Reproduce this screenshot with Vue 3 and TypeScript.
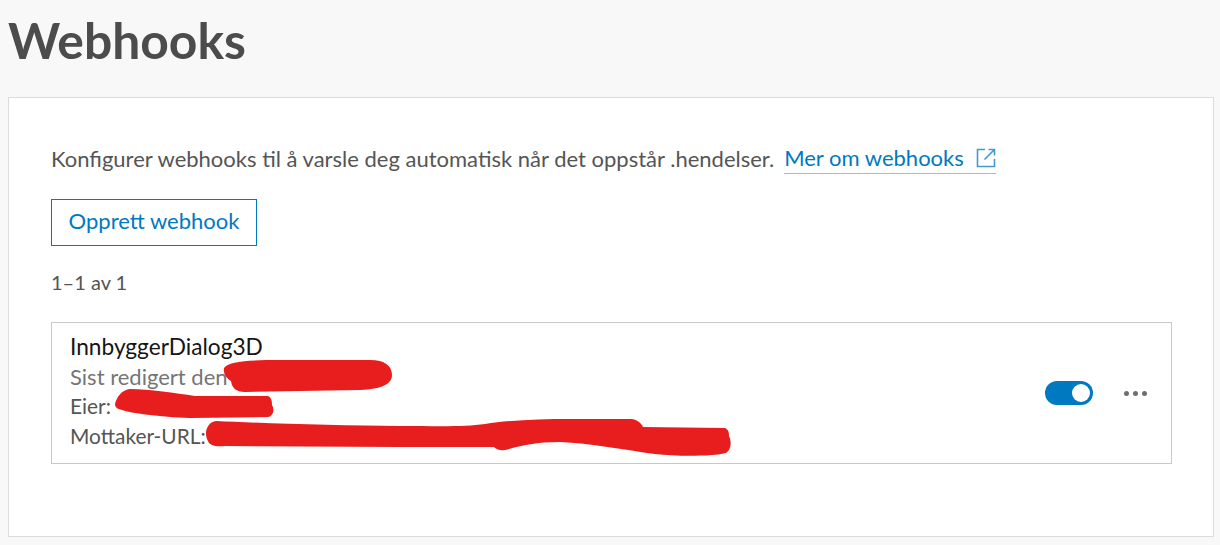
<script setup lang="ts">
const title = 'Webhooks'
</script>

<template>
  <div class="page">
    <h1 class="title">{{ title }}</h1>
    <section class="panel">
      <p class="intro">
        <span>Konfigurer webhooks til å varsle deg automatisk når det oppstår .hendelser.</span>
        <a class="link">
          <span>Mer om webhooks</span>
          <svg class="ext" width="20" height="20" viewBox="0 0 20 20" fill="none">
            <path d="M9 1.5H1.5v17h17V11" stroke="#0079c1" stroke-opacity=".75" stroke-width="1.6" />
            <path d="M8.5 11.5 18 2M12.5 1.5h6v6" stroke="#0079c1" stroke-opacity=".75" stroke-width="1.6" />
          </svg>
        </a>
      </p>
      <button class="create">Opprett webhook</button>
      <div class="count">1–1 av 1</div>
      <div class="card">
        <div class="info">
          <div class="name">InnbyggerDialog3D</div>
          <div class="muted">Sist redigert den</div>
          <div>Eier:</div>
          <div>Mottaker-URL:</div>
        </div>
        <div class="actions">
          <span class="toggle"><span class="knob"></span></span>
          <span class="more"><i></i><i></i><i></i></span>
        </div>
        <svg class="scribble" width="1119" height="140" viewBox="52 323 1119 140">
          <path d="M224 368C228 361 250 360 280 360L370 360C385 360 392 366 392 375 392 384 382 389 360 390L245 392C236 392 232 388 231 381 226 378 223 373 224 368Z" fill="#e81e1e" />
          <path d="M115 404C117 396 122 390 130 389 150 389 175 393 195 396L268 396C272 398 272 402 272 405 275 410 273 416 268 417L190 418C160 417 130 413 122 410 117 409 115 407 115 404Z" fill="#e81e1e" />
          <path d="M206 432C207 426 210 422 216 421 260 423 340 426 400 426 440 426 465 427 485 424 510 420 540 419 570 419L632 419C638 420 642 424 643 427L725 428C729 430 729 433 729 436 732 442 731 450 726 453 715 456 680 457 655 454 625 450 590 443 560 442 535 442 520 446 505 450 500 451 496 449 494 447L400 447 225 446C215 447 209 445 208 441 206 438 206 435 206 432Z" fill="#e81e1e" />
        </svg>
      </div>
    </section>
  </div>
</template>

<style>
html, body { margin: 0; background: #f8f8f8; }
</style>

<style scoped>
.page {
  height: 545px;
  box-sizing: border-box;
  padding: 0 6px 8px 8px;
  background: #f8f8f8;
  font-family: Lato, "Open Sans", sans-serif;
  color: #555;
  overflow: hidden;
  display: flex;
  flex-direction: column;
}
.title {
  margin: 0;
  height: 97px;
  font-size: 49.8px;
  line-height: 80px;
  font-weight: 700;
  color: #4c4c4c;
}
.panel {
  flex: 1;
  background: #fff;
  border: 1px solid #dcdcdc;
  padding: 45px 42px 0;
  box-sizing: border-box;
  display: flex;
  flex-direction: column;
  align-items: flex-start;
}
.intro {
  margin: 0;
  height: 56px;
  display: flex;
  align-items: flex-start;
  font-size: 22px;
  line-height: 32px;
  white-space: nowrap;
}
.link {
  margin-left: 10px;
  height: 30px;
  display: inline-flex;
  align-items: center;
  gap: 12px;
  color: #0079c1;
  border-bottom: 1px solid #8fc1e0;
}
.ext { display: block; }
.create {
  width: 206px;
  height: 47px;
  box-sizing: border-box;
  background: #fff;
  border: 1px solid #0079c1;
  color: #0079c1;
  font: inherit;
  font-size: 22px;
  line-height: 40px;
  padding: 0 0 4px;
}
.count {
  margin-top: 22px;
  height: 28px;
  font-size: 20px;
  line-height: 28px;
}
.card {
  position: relative;
  margin-top: 26px;
  width: 1121px;
  height: 142px;
  box-sizing: border-box;
  border: 1px solid #c9c9c9;
  padding: 9px 18px;
  display: flex;
  justify-content: space-between;
  align-items: center;
}
.info {
  font-size: 20.9px;
  line-height: 29.6px;
  color: #555;
  align-self: flex-start;
}
.name { color: #151515; font-size: 22.7px; }
.muted { color: #757575; font-size: 22px; }
.actions {
  display: flex;
  align-items: center;
  gap: 31px;
  margin-right: 6px;
}
.toggle {
  width: 48px;
  height: 24px;
  border-radius: 12px;
  background: #0079c1;
  position: relative;
  display: block;
}
.knob {
  position: absolute;
  right: 3px;
  top: 3px;
  width: 18px;
  height: 18px;
  border-radius: 50%;
  background: #fff;
}
.more {
  display: flex;
  gap: 4px;
  margin-top: 1px;
}
.more i {
  width: 5px;
  height: 5px;
  border-radius: 50%;
  background: #6e6e6e;
}
.scribble {
  position: absolute;
  left: 0;
  top: 0;
  pointer-events: none;
}
</style>
